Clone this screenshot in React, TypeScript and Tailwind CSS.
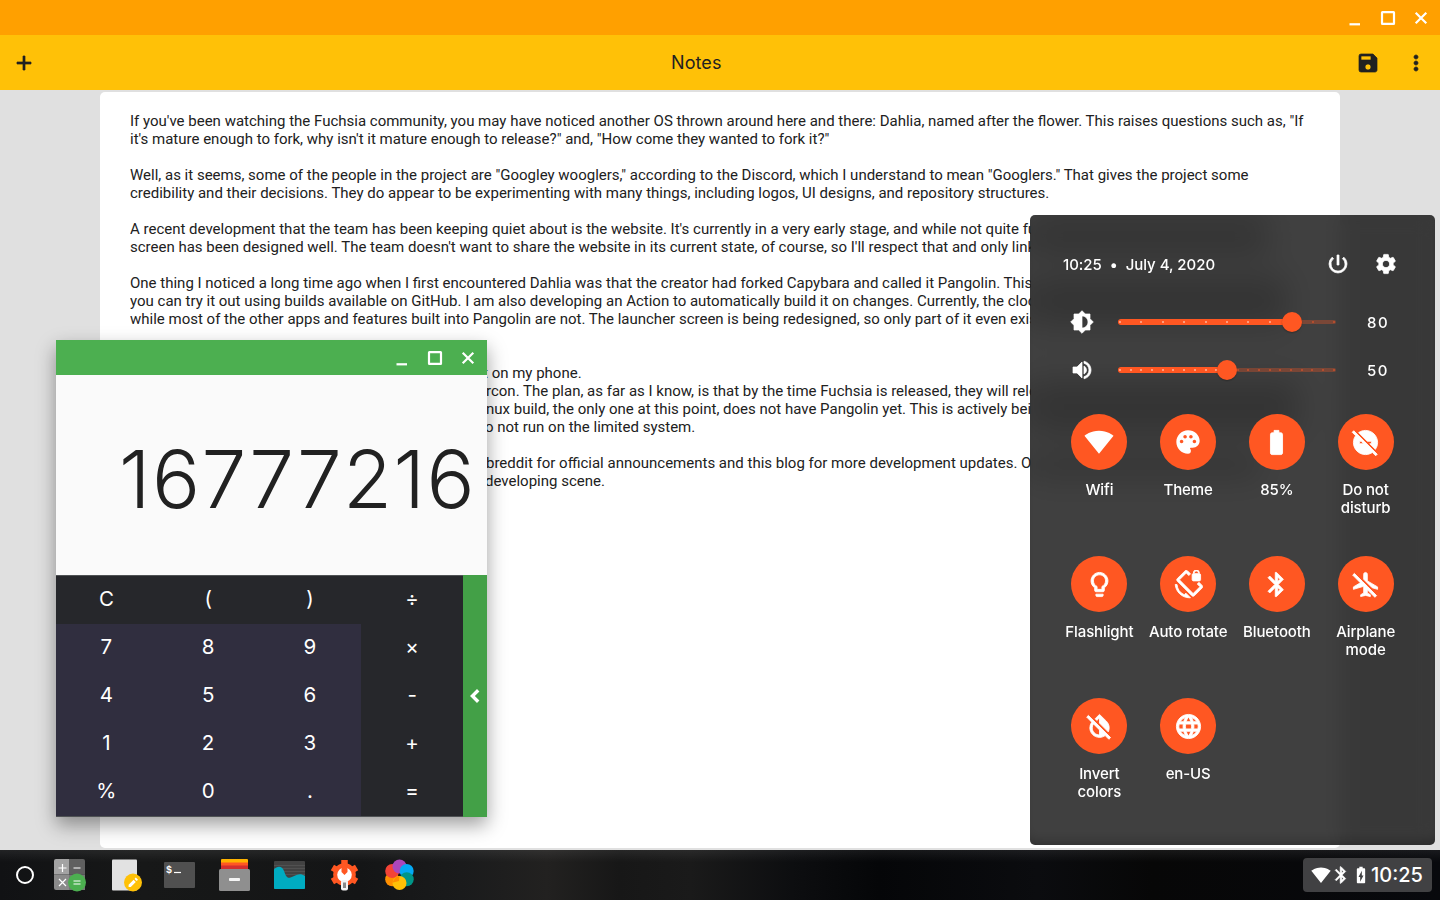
import type { ComponentType, ReactNode } from "react";
import {
  MdAdd, MdAirplanemodeInactive, MdBatteryChargingFull, MdBatteryFull, MdBluetooth, MdBrightnessMedium,
  MdChevronLeft, MdDoNotDisturbOff, MdInvertColorsOff, MdLanguage, MdLightbulbOutline, MdMoreVert,
  MdPalette, MdPowerSettingsNew, MdSave, MdScreenLockRotation, MdSettings, MdSignalWifi4Bar, MdVolumeUp,
} from "react-icons/md";

type IconType = ComponentType<{ className?: string }>;

const bold = "stroke-current [stroke-width:0.7] [&>path[fill=none]]:stroke-none ";

function WindowControls() {
  return (
    <svg viewBox="0 0 84 20" className="h-5 w-[84px]" fill="none" stroke="#fff" strokeWidth="2.2">
      <path d="M2.500 16.300h10.500" />
      <rect x="35" y="4.200" width="12" height="11.600" rx="0.400" />
      <path d="M68.700 4.800l10.600 10.400M79.300 4.800L68.700 15.200" />
    </svg>
  );
}

type Line = { text: string; pad?: string };

const lines: Line[] = [
  { text: "If you've been watching the Fuchsia community, you may have noticed another OS thrown around here and there: Dahlia, named after the flower. This raises questions such as, \"If" },
  { text: "it's mature enough to fork, why isn't it mature enough to release?\" and, \"How come they wanted to fork it?\"" },
  { text: "" },
  { text: "Well, as it seems, some of the people in the project are \"Googley wooglers,\" according to the Discord, which I understand to mean \"Googlers.\" That gives the project some" },
  { text: "credibility and their decisions. They do appear to be experimenting with many things, including logos, UI designs, and repository structures." },
  { text: "" },
  { text: "A recent development that the team has been keeping quiet about is the website. It's currently in a very early stage, and while not quite fu" },
  { text: "screen has been designed well. The team doesn't want to share the website in its current state, of course, so I'll respect that and only link" },
  { text: "" },
  { text: "One thing I noticed a long time ago when I first encountered Dahlia was that the creator had forked Capybara and called it Pangolin. This" },
  { text: "you can try it out using builds available on GitHub. I am also developing an Action to automatically build it on changes. Currently, the cloc" },
  { text: "while most of the other apps and features built into Pangolin are not. The launcher screen is being redesigned, so only part of it even exis" },
  { text: "" },
  { text: "" },
  { text: "t on my phone.", pad: "pl-[353px]" },
  { text: "rcon. The plan, as far as I know, is that by the time Fuchsia is released, they will rele", pad: "pl-[356px]" },
  { text: "nux build, the only one at this point, does not have Pangolin yet. This is actively bein", pad: "pl-[356px]" },
  { text: "o not run on the limited system.", pad: "pl-[355px]" },
  { text: "" },
  { text: "breddit for official announcements and this blog for more development updates. Of", pad: "pl-[356px]" },
  { text: "developing scene.", pad: "pl-[355px]" },
];

function NotesWindow() {
  return (
    <div className="flex h-[850px] flex-col bg-[#e0e0e0]">
      <div className="flex h-[35px] shrink-0 items-center justify-end bg-[#ffa000] pr-[9px]">
        <WindowControls />
      </div>
      <div className="flex h-[55px] shrink-0 items-center bg-[#ffc107] px-3 text-[#212121]">
        <MdAdd className={bold + "size-6"} />
        <div className="ml-[635px] grow font-['Inter'] text-[18px] tracking-[0.1px]">Notes</div>
        <MdSave className={bold + "mr-6 size-6"} />
        <MdMoreVert className={bold + "size-6"} />
      </div>
      <div className="mx-[100px] mt-[2px] h-[756px] overflow-hidden rounded-[5px] bg-white px-[30px] pt-5 font-['Roboto'] text-[15px] leading-[18px] text-[#212121]">
        {lines.map((l, i) => (
          <div key={i} className={"h-[18px] whitespace-pre " + (i > 5 ? "w-[901px] overflow-hidden " : "") + (l.pad ?? "")}>{l.text}</div>
        ))}
      </div>
    </div>
  );
}

const keys = ["C", "(", ")", "÷", "7", "8", "9", "×", "4", "5", "6", "-", "1", "2", "3", "+", "%", "0", ".", "="];

function Calculator() {
  return (
    <div className="absolute left-[56px] top-[340px] flex h-[477px] w-[431px] flex-col shadow-[0_8px_18px_rgba(0,0,0,0.38)]">
      <div className="flex h-[35px] shrink-0 items-center justify-end bg-[#4caf50] pr-[9px]">
        <WindowControls />
      </div>
      <div className="flex h-[200px] shrink-0 items-center justify-end bg-[#fafafa] pr-[11px] pt-[8px] font-['Inter'] text-[80px] font-[350] leading-none tracking-[1.4px] text-[#212121]">
        16777216
      </div>
      <div className="flex grow border-y border-[#4f5254] bg-[#26272b]">
        <div className="grid w-[407px] grid-cols-4 grid-rows-5 font-['Inter'] text-[20.5px] text-white">
          {keys.map((k, i) => (
            <div key={k} className={"flex items-center justify-center pb-px " + (i % 4 < 3 ? "pr-px " : "") + (i > 3 && i % 4 < 3 ? "bg-[#302e3f]" : "")}>{k}</div>
          ))}
        </div>
        <div className="-my-px flex w-6 items-center justify-center bg-[#43a047] text-white">
          <MdChevronLeft className="size-6 stroke-current [stroke-width:1.4] [&>path[fill=none]]:stroke-none" />
        </div>
      </div>
    </div>
  );
}

function Slider({ icon: Icon, value, ticks, fill, thumb }: { icon: IconType; value: number; ticks: number; fill: string; thumb: string }) {
  return (
    <div className="flex h-12 items-center">
      <Icon className={bold + "ml-10 size-6"} />
      <div className="relative ml-6 flex h-6 w-[218px] items-center">
        <div className="h-1 w-full rounded-full bg-[#ff5722]/30" />
        <div className={"absolute left-0 h-1.5 rounded-full bg-[#ff5722] " + fill} />
        <div className="absolute inset-x-px flex justify-between">
          {Array.from({ length: ticks }, (_, i) => (
            <span key={i} className={"size-0.5 rounded-full " + (i / (ticks - 1) < value / 100 ? "bg-[#ffb49c]" : "bg-[#c9502c]")} />
          ))}
        </div>
        <div className={"absolute size-5 rounded-full bg-[#ff5722] shadow-[0_1px_2px_rgba(0,0,0,0.3)] " + thumb} />
      </div>
      <div className="ml-[31px] pt-[3px] text-[15px] tracking-[1.6px]">{value}</div>
    </div>
  );
}

const tiles: { icon: IconType; label: ReactNode; size?: string }[] = [
  { icon: MdSignalWifi4Bar, label: "Wifi", size: "size-[30px]" },
  { icon: MdPalette, label: "Theme", size: "size-[28px]" },
  { icon: MdBatteryFull, label: "85%" },
  { icon: MdDoNotDisturbOff, label: <>Do not<br />disturb</> },
  { icon: MdLightbulbOutline, label: "Flashlight" },
  { icon: MdScreenLockRotation, label: "Auto rotate" },
  { icon: MdBluetooth, label: "Bluetooth" },
  { icon: MdAirplanemodeInactive, label: <>Airplane<br />mode</> },
  { icon: MdInvertColorsOff, label: <>Invert<br />colors</> },
  { icon: MdLanguage, label: "en-US" },
];

function QuickSettings() {
  return (
    <>
      <div className="absolute left-[1030px] top-[215px] h-[630px] w-[405px] overflow-hidden rounded-[5px]">
        <div className="absolute left-0 top-[4px] h-[36px] w-[238px] bg-black/20 blur-[12px]" />
        <div className="absolute left-0 top-[62px] h-[48px] w-[256px] bg-black/20 blur-[12px]" />
        <div className="absolute left-0 top-[166px] h-[52px] w-[268px] bg-black/20 blur-[12px]" />
        <div className="absolute left-0 top-[240px] h-[22px] w-[230px] bg-black/20 blur-[12px]" />
      </div>
      <div className="absolute left-[1030px] top-[215px] flex h-[630px] w-[405px] flex-col rounded-[5px] bg-black/75 pt-[25px] font-['Inter'] font-medium text-white shadow-[inset_0_-10px_14px_-8px_rgba(0,0,0,0.3)] backdrop-blur-[10px]">
        <div className="flex h-12 items-center pl-[33px] pr-[37px]">
          <div className="grow whitespace-pre pt-0.5 text-[15px] tracking-[-0.03px]">10:25  •  July 4, 2020</div>
          <MdPowerSettingsNew className={bold + "mr-6 size-6"} />
          <MdSettings className={bold + "size-6"} />
        </div>
        <div className="mt-[10px]">
          <Slider icon={MdBrightnessMedium} value={80} ticks={11} fill="w-[174px]" thumb="left-[164px]" />
          <Slider icon={MdVolumeUp} value={50} ticks={21} fill="w-[109px]" thumb="left-[99px]" />
        </div>
        <div className="ml-[25px] mt-5 grid w-[355px] auto-rows-[142px] grid-cols-4">
          {tiles.map(({ icon: Icon, label, size }, i) => (
            <div key={i} className="flex flex-col items-center">
              <div className="flex size-14 items-center justify-center rounded-full bg-[#ff5722]">
                <Icon className={size ?? bold + "size-[29px]"} />
              </div>
              <div className="mt-[11px] whitespace-nowrap text-center text-[15px] leading-[18px] tracking-[-0.12px]">{label}</div>
            </div>
          ))}
        </div>
      </div>
    </>
  );
}

function Launcher({ children }: { children: ReactNode }) {
  return <svg viewBox="0 0 36 36" className="mr-[19px] size-9 shrink-0">{children}</svg>;
}

function Taskbar() {
  return (
    <div className="flex h-[50px] items-center bg-[linear-gradient(to_bottom,rgba(255,255,255,0.07),transparent_12px),linear-gradient(90deg,#111214_0%,#171818_10%,#141516_25%,#1a1b1c_32%,#222120_38%,#171717_43%,#1a1a1a_48%,#0d0e10_55%,#050608_61%,#0b0c0f_72%,#070707_80%,#08090d_100%)] pr-2">
      <div className="ml-4 mr-[17px] size-[18px] rounded-full border-2 border-white" />
      <Launcher>
        <path d="M3 4a2 2 0 0 1 2-2h13v15.500H3z" fill="#a3a3a3" />
        <path d="M18 2h14a2 2 0 0 1 2 2v13.500H18z" fill="#5f5f5f" />
        <path d="M3 17.500h15V33H5a2 2 0 0 1-2-2z" fill="#8a8a8a" />
        <path d="M18 17.500h16V33H18z" fill="#757575" />
        <path d="M7.500 11h8M11.500 7v8M22.500 11h7M8 22l7 7M15 22l-7 7" stroke="#fff" strokeWidth="1.200" />
        <circle cx="26" cy="25.500" r="9" fill="#4caf50" />
        <path d="M22.500 24h7M22.500 27h7" stroke="#fff" strokeWidth="1.200" />
      </Launcher>
      <Launcher>
        <rect x="6" y="2.500" width="25" height="31" rx="1" fill="#e2e2e2" />
        <circle cx="27" cy="25.500" r="9" fill="#ffc107" />
        <path d="M22.600 27.800v2.200h2.200l5-5-2.200-2.200zM28.500 21.900l1.300-1.300 2.200 2.200-1.300 1.300z" fill="#fff" />
      </Launcher>
      <Launcher>
        <rect x="3" y="5" width="31" height="26" rx="1" fill="#505050" />
        <text x="5" y="16" fill="#fff" fontFamily="Liberation Mono" fontSize="10" fontWeight="700">$</text>
        <path d="M13 15.500h7" stroke="#fff" strokeWidth="1.200" />
      </Launcher>
      <Launcher>
        <path d="M5 3a1 1 0 0 1 1-1h25a1 1 0 0 1 1 1v3H5z" fill="#ffb300" />
        <path d="M5 5.500h27v4H5z" fill="#ff5722" />
        <path d="M5 8.500h27V14H5z" fill="#d32f2f" />
        <rect x="3" y="12" width="31" height="22" rx="1.500" fill="#8f8f8f" />
        <rect x="13" y="21" width="11" height="3" rx="0.800" fill="#f5f5f5" />
      </Launcher>
      <Launcher>
        <rect x="3" y="4" width="31" height="28" rx="1" fill="#424242" />
        <path d="M3 8.500h31M3 11.500h31M3 14.500h31M3 17.500h31" stroke="#555" strokeWidth="0.800" />
        <path d="M3 12.500c3-3.500 8-4 10 1.500s3 7.500 6.500 6.500 8.500-6 14.500-1.500v12a1 1 0 0 1-1 1H4a1 1 0 0 1-1-1z" fill="#00acc1" />
      </Launcher>
      <Launcher>
        <circle cx="18.500" cy="17.500" r="11.300" fill="#ff5722" />
        <g stroke="#ff5722" strokeWidth="6.500" strokeLinejoin="round">
          <path d="M18.500 3v28M6.400 10.500l24.200 14M30.600 10.500l-24.200 14" />
        </g>
        <circle cx="18.500" cy="17.800" r="7.300" fill="#fff" />
        <path d="M15.500 8h6v7l-3 3-3-3z" fill="#ff5722" />
        <rect x="15" y="23" width="7" height="10.500" rx="2" fill="#f2f2f2" />
        <rect x="17" y="25.500" width="3" height="5.500" fill="#888" />
      </Launcher>
      <Launcher>
        <circle cx="11.200" cy="22.200" r="7" fill="#ff8f00" />
        <circle cx="11.200" cy="14" r="7" fill="#f44336" />
        <circle cx="18.500" cy="9.500" r="7" fill="#ab47bc" />
        <circle cx="25.700" cy="14" r="7" fill="#03a9f4" />
        <circle cx="25.700" cy="22.200" r="7" fill="#009688" />
        <circle cx="18.500" cy="26" r="7" fill="#ffc107" />
        <path d="M18.500 19a7 7 0 0 0-4.500 1.800l-2.800 5L18 24z" fill="#ff8f00" />
      </Launcher>
      <div className="ml-auto flex h-[34px] w-[129px] items-center rounded bg-[#414143] pl-2 text-white">
        <MdSignalWifi4Bar className="size-5" />
        <MdBluetooth className={bold + "size-5"} />
        <MdBatteryChargingFull className="size-5" />
        <span className="font-['Inter'] text-[20px] font-medium">10:25</span>
      </div>
    </div>
  );
}

export default function App() {
  return (
    <div className="relative h-[900px] w-[1440px] overflow-hidden">
      <NotesWindow />
      <Taskbar />
      <Calculator />
      <QuickSettings />
    </div>
  );
}
